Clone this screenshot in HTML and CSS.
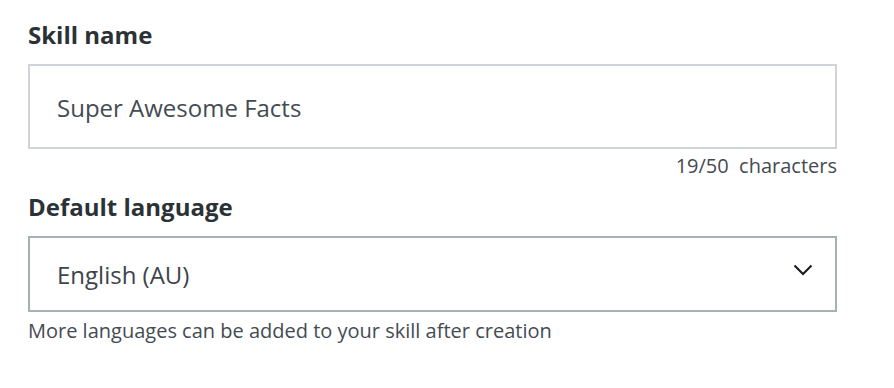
FILE: index.html
```html
<!DOCTYPE html>
<html lang="en">
<head>
<meta charset="utf-8">
<title>Skill form</title>
<link rel="stylesheet" href="styles.css">
</head>
<body>
<form class="form">
  <div class="field">
    <label class="label" for="skill">Skill name</label>
    <div class="input">Super Awesome Facts</div>
    <div class="counter">19/50&nbsp; characters</div>
  </div>
  <div class="field field-lang">
    <label class="label">Default language</label>
    <div class="select">
      <span>English (AU)</span>
      <svg class="chevron" width="20" height="12" viewBox="0 0 20 12"><path d="M1.5 1.5 L10 10 L18.5 1.5" fill="none" stroke="#16191f" stroke-width="2"/></svg>
    </div>
    <div class="hint">More languages can be added to your skill after creation</div>
  </div>
</form>
</body>
</html>
```
FILE: styles.css
```css
html, body {
  margin: 0;
  padding: 0;
  background: #ffffff;
}
.form {
  width: 809px;
  padding: 19px 0 0 28px;
  font-family: "Open Sans", sans-serif;
}
.field {
  display: flex;
  flex-direction: column;
}
.label {
  font-size: 24px;
  font-weight: 700;
  line-height: 32px;
  color: #2b3235;
  margin-bottom: 13px;
}
.input {
  box-sizing: border-box;
  height: 85px;
  border: 2px solid #d0d4d8;
  padding: 1px 27px 0;
  display: flex;
  align-items: center;
  font-size: 24px;
  color: #444b53;
}
.counter {
  align-self: flex-end;
  font-size: 20px;
  line-height: 24px;
  color: #444b53;
  margin-top: 5px;
}
.field-lang {
  margin-top: 13px;
}
.select {
  box-sizing: border-box;
  height: 76px;
  border: 2px solid #a7b1b1;
  padding: 0 22px 0 27px;
  display: flex;
  align-items: center;
  justify-content: space-between;
  font-size: 24px;
  color: #3d444b;
}
.chevron {
  margin-bottom: 8px;
}
.hint {
  font-size: 20px;
  line-height: 24px;
  color: #444b53;
  margin-top: 7px;
}
```
